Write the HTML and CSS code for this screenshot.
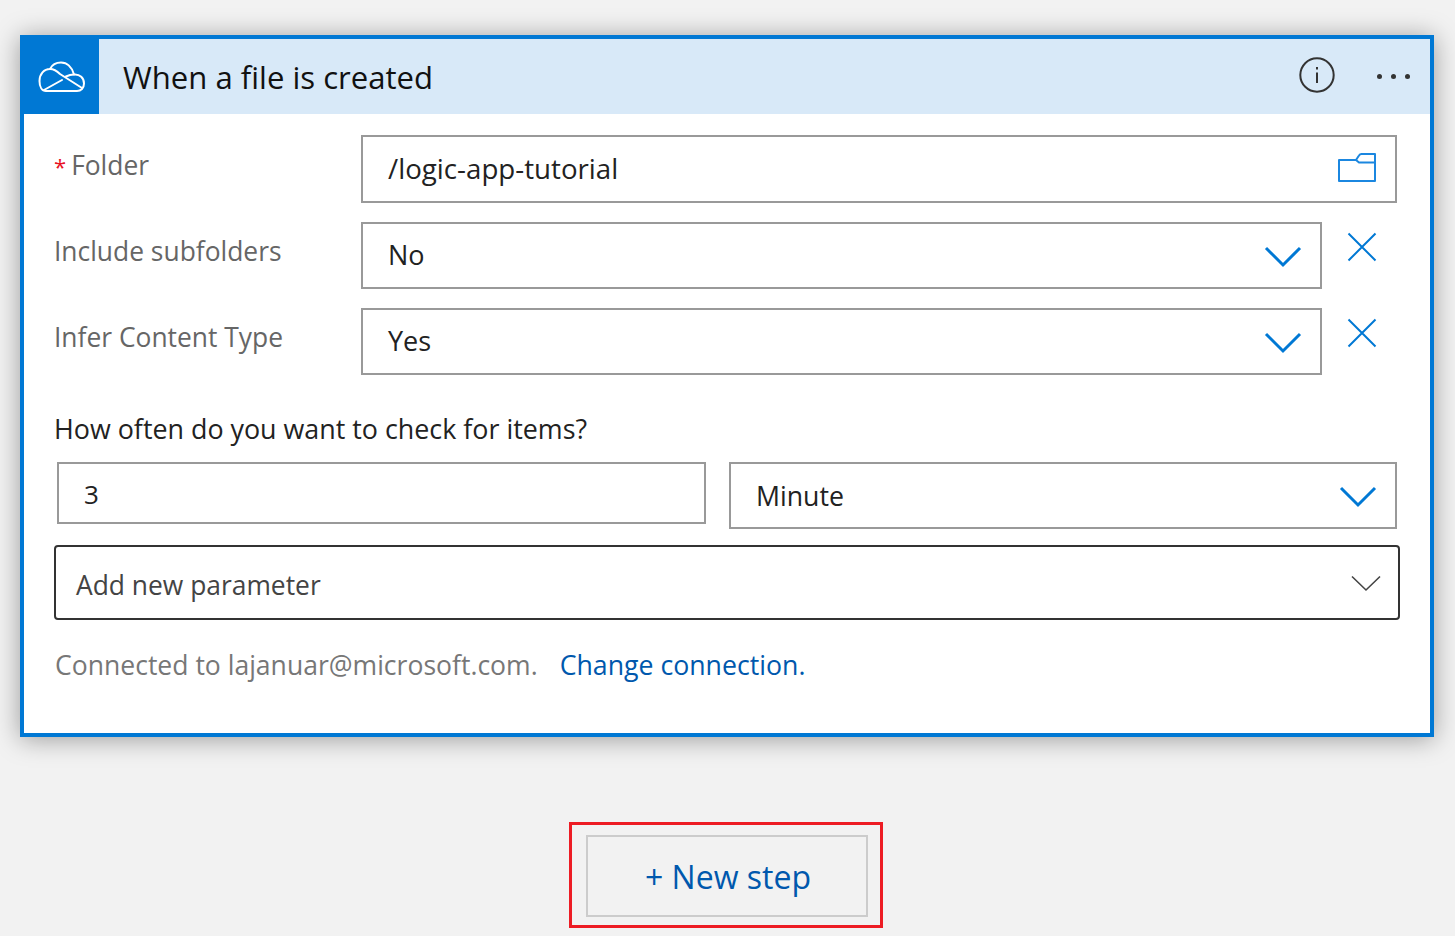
FILE: index.html
```html
<!DOCTYPE html>
<html lang="en">
<head>
  <meta charset="UTF-8">
  <title>When a file is created</title>
  <link rel="stylesheet" href="styles.css">
</head>
<body>
  <div class="card">
    <div class="card-header">
      <div class="card-logo">
        <svg width="47" height="31" viewBox="0 0 47 31" fill="none" stroke="#fff" stroke-width="2" stroke-linejoin="round" stroke-linecap="round">
          <path d="M8 30H39C43 30 46 27 46 22.500C46 17 42 13 36 13.500C34 6 29 1.500 23 1.500C18 1.500 14 4 12 8C6 8 1.500 13 1.500 20C1.500 26 4 30 8 30Z"/>
          <path d="M6 29L24 19"/>
          <path d="M12 8C16 8 19 10 22 13L44 27"/>
          <path d="M36 13.500C33 13.500 31 14 28 15.500"/>
        </svg>
      </div>
      <div class="card-title">When a file is created</div>
      <svg class="info-icon" width="36" height="36" viewBox="0 0 36 36" fill="none" stroke="#333" stroke-width="2">
        <circle cx="18" cy="18" r="16.700"/>
        <path d="M18 15.500V26"/>
        <path d="M18 10V12.500"/>
      </svg>
      <div class="more-dots"><span></span><span></span><span></span></div>
    </div>

    <div class="card-body">
      <div class="field-row">
        <label class="field-label label-folder"><span class="required">*</span>Folder</label>
        <div class="box box-wide">
          <span>/logic-app-tutorial</span>
          <svg class="folder-icon" width="38" height="29" viewBox="0 0 38 29" fill="none" stroke="#1b87e0" stroke-width="2" stroke-linejoin="round">
            <path d="M1 7H18L21 2.500C21.500 1.700 22 1 23.500 1H37V28H1Z"/>
            <path d="M18 7L21 9.500H37"/>
          </svg>
        </div>
      </div>

      <div class="field-row">
        <label class="field-label">Include subfolders</label>
        <div class="box box-short">
          <span>No</span>
          <svg class="chevron" width="38" height="22" viewBox="0 0 38 22" fill="none" stroke="#0078d4" stroke-width="3"><path d="M2 2L19 19L36 2"/></svg>
        </div>
        <svg class="remove-icon" width="30" height="30" viewBox="0 0 30 30" stroke="#0078d4" stroke-width="2"><path d="M1.500 1.500L28.500 28.500M28.500 1.500L1.500 28.500"/></svg>
      </div>

      <div class="field-row">
        <label class="field-label">Infer Content Type</label>
        <div class="box box-short">
          <span>Yes</span>
          <svg class="chevron" width="38" height="22" viewBox="0 0 38 22" fill="none" stroke="#0078d4" stroke-width="3"><path d="M2 2L19 19L36 2"/></svg>
        </div>
        <svg class="remove-icon" width="30" height="30" viewBox="0 0 30 30" stroke="#0078d4" stroke-width="2"><path d="M1.500 1.500L28.500 28.500M28.500 1.500L1.500 28.500"/></svg>
      </div>

      <div class="recurrence-label">How often do you want to check for items?</div>
      <div class="recurrence-row">
        <div class="box box-interval"><span>3</span></div>
        <div class="box box-unit">
          <span>Minute</span>
          <svg class="chevron" width="38" height="22" viewBox="0 0 38 22" fill="none" stroke="#0078d4" stroke-width="3"><path d="M2 2L19 19L36 2"/></svg>
        </div>
      </div>

      <div class="add-param">
        <span>Add new parameter</span>
        <svg width="30" height="17" viewBox="0 0 30 17" fill="none" stroke="#444" stroke-width="1.600"><path d="M1 1.500L15 15L29 1.500"/></svg>
      </div>

      <div class="connection">
        Connected to lajanuar@microsoft.com.<a href="#">Change connection.</a>
      </div>
    </div>
  </div>

  <div class="step-area">
    <div class="highlight">
      <button class="new-step">+ New step</button>
    </div>
  </div>
</body>
</html>
```

FILE: styles.css
```css
body {
  margin: 0;
  padding: 35px 21px 0 20px;
  height: 936px;
  box-sizing: border-box;
  overflow: hidden;
  background-color: #f2f2f2;
  font-family: 'Open Sans', 'Noto Sans', sans-serif;
}

.card {
  width: 1414px;
  height: 702px;
  box-sizing: border-box;
  border: 4px solid #0078d4;
  background-color: #fff;
  box-shadow: 0 2px 24px rgba(0, 0, 0, 0.36);
}

.card-header {
  display: flex;
  align-items: center;
  height: 75px;
  background-color: #d8e9f8;
}

.card-logo {
  display: flex;
  align-items: center;
  justify-content: center;
  width: 79px;
  height: 79px;
  margin: -4px 0 0 -4px;
  padding: 4px 0 0 4px;
  box-sizing: border-box;
  background-color: #0078d4;
}

.card-title {
  flex: 1;
  margin: 1px 0 0 24px;
  font-size: 31.1px;
  color: #111;
}

.info-icon {
  margin: -4px 2px 0 0;
}

.more-dots {
  display: flex;
  gap: 9px;
  margin: 0 20px 0 40px;
}

.more-dots span {
  width: 5px;
  height: 5px;
  border-radius: 50%;
  background-color: #333;
}

.card-body {
  padding: 21px 33px 0 31px;
}

.field-row {
  display: flex;
  align-items: flex-start;
  margin-bottom: 19px;
}

.field-label {
  width: 306px;
  flex-shrink: 0;
  padding-top: 11px;
  margin-left: -1px;
  margin-right: 1px;
  font-size: 26.4px;
  line-height: 36px;
  color: #666;
}

.label-folder {
  padding-top: 12px;
}

.required {
  color: #e81123;
  margin-right: 5px;
  font-size: 22px;
}

.box {
  display: flex;
  align-items: center;
  justify-content: space-between;
  box-sizing: border-box;
  height: 67px;
  padding: 0 12px 0 25px;
  border: 2px solid #999;
  background-color: #fff;
  font-size: 27px;
  color: #222;
}

.box-wide {
  width: 1036px;
  height: 68px;
  padding-right: 19px;
  padding-bottom: 2px;
  font-size: 27.700px;
}

.folder-icon {
  margin-top: -1px;
}

.box-short {
  width: 961px;
  padding-right: 18px;
  padding-bottom: 2px;
}

.chevron {
  margin-top: 3px;
}

.box-short .chevron {
  margin-top: 5px;
}

.remove-icon {
  margin: 10px 0 0 25px;
}

.recurrence-label {
  margin: 36px 0 0 -1px;
  font-size: 26.850px;
  line-height: 36px;
  color: #222;
}

.recurrence-row {
  display: flex;
  align-items: flex-start;
  gap: 23px;
  margin: 15px 0 16px 2px;
}

.box-interval {
  width: 649px;
  height: 62px;
  padding: 2px 12px 0 25px;
  font-size: 26px;
}

.box-unit {
  width: 668px;
  padding-right: 18px;
  font-size: 26.700px;
}

.add-param {
  display: flex;
  align-items: center;
  justify-content: space-between;
  box-sizing: border-box;
  width: 1346px;
  height: 75px;
  margin-left: -1px;
  padding: 4px 17px 0 20px;
  border: 2px solid #333;
  border-radius: 4px;
  font-size: 26.400px;
  color: #444;
}

.add-param svg {
  margin-top: -3px;
}

.connection {
  margin-top: 27px;
  font-size: 26.550px;
  line-height: 36px;
  color: #777;
}

.connection a {
  margin-left: 22px;
  font-size: 26.700px;
  color: #0058ad;
  text-decoration: none;
}

.step-area {
  display: flex;
  justify-content: center;
  margin: 85px 0 0 -3px;
}

.highlight {
  box-sizing: border-box;
  width: 314px;
  height: 106px;
  padding: 10px 14px;
  border: 3px solid #ed1c24;
}

.new-step {
  display: block;
  box-sizing: border-box;
  width: 282px;
  height: 82px;
  padding-left: 9px;
  border: 2px solid #ccc;
  background-color: #f2f2f2;
  font-family: inherit;
  font-size: 32px;
  color: #0058ad;
}
```
